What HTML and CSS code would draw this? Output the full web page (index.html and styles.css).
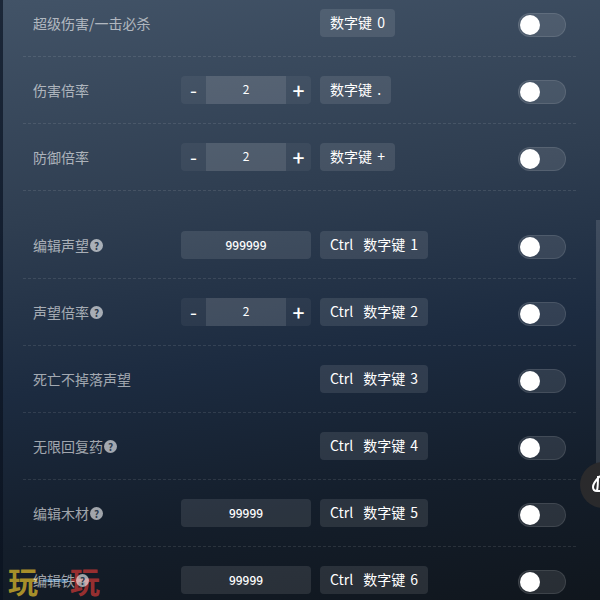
FILE: index.html
```html
<!DOCTYPE html>
<html lang="zh-CN">
<head>
<meta charset="utf-8">
<title>修改器</title>
<link rel="stylesheet" href="styles.css">
</head>
<body>
<div class="page">
  <div class="mark"><span class="gold">玩</span><i class="streak"></i><span class="red">玩</span></div>
  <main class="list">
    <section class="group">
      <div class="row"><span class="label">超级伤害/一击必杀</span><span></span><div class="key"><span>数字键 0</span></div><span class="toggle"><i class="knob"></i></span></div>
      <div class="row"><span class="label">伤害倍率</span><div class="stepper"><span class="btn">-</span><span class="val">2</span><span class="btn plus">+</span></div><div class="key"><span>数字键 .</span></div><span class="toggle"><i class="knob"></i></span></div>
      <div class="row"><span class="label">防御倍率</span><div class="stepper"><span class="btn">-</span><span class="val">2</span><span class="btn plus">+</span></div><div class="key"><span>数字键 +</span></div><span class="toggle"><i class="knob"></i></span></div>
    </section>
    <section class="group second">
      <div class="row"><span class="label">编辑声望<b class="help">?</b></span><div class="field">999999</div><div class="key"><span>Ctrl</span><span>数字键 1</span></div><span class="toggle"><i class="knob"></i></span></div>
      <div class="row"><span class="label">声望倍率<b class="help">?</b></span><div class="stepper"><span class="btn">-</span><span class="val">2</span><span class="btn plus">+</span></div><div class="key"><span>Ctrl</span><span>数字键 2</span></div><span class="toggle"><i class="knob"></i></span></div>
      <div class="row"><span class="label">死亡不掉落声望</span><span></span><div class="key"><span>Ctrl</span><span>数字键 3</span></div><span class="toggle"><i class="knob"></i></span></div>
      <div class="row"><span class="label">无限回复药<b class="help">?</b></span><span></span><div class="key"><span>Ctrl</span><span>数字键 4</span></div><span class="toggle"><i class="knob"></i></span></div>
      <div class="row"><span class="label">编辑木材<b class="help">?</b></span><div class="field">99999</div><div class="key"><span>Ctrl</span><span>数字键 5</span></div><span class="toggle"><i class="knob"></i></span></div>
      <div class="row"><span class="label">编辑铁<b class="help">?</b></span><div class="field">99999</div><div class="key"><span>Ctrl</span><span>数字键 6</span></div><span class="toggle"><i class="knob"></i></span></div>
    </section>
  </main>
  <div class="scrollbar"></div>
  <div class="float-btn">
    <svg width="46" height="46" viewBox="0 0 46 46" fill="none" stroke="#fff" stroke-width="2"><path d="M20 14c-3 3-7 7-7 11 0 3 2 4 4 4h4M18 14c0 5 0 10-1 15"/></svg>
  </div>
</div>
</body>
</html>
```
FILE: styles.css
```css
* { box-sizing: border-box; }
html, body { margin: 0; height: 100%; overflow: hidden; background: #10171f; }
body { font-family: "Noto Sans CJK SC", "Noto Sans", sans-serif; font-size: 14px; }
.page {
  position: relative;
  width: 600px;
  height: 600px;
  overflow: hidden;
  border-left: 3px solid rgba(10, 20, 35, 0.65);
  background: linear-gradient(172deg, #425367 0%, #2f3e51 33%, #1c2b40 58%, #141e2b 80%, #10161d 100%);
}
.list { position: relative; width: 553px; margin: -10px 0 0 20px; }
.second { margin-top: 21px; }
.row {
  display: grid;
  grid-template-columns: 148px 130px 1fr 48px;
  align-items: center;
  height: 67px;
  padding: 19px 10px 19px 10px;
  border-bottom: 1px dashed rgba(255, 255, 255, 0.1);
}
.label { display: flex; align-items: center; color: rgba(255, 255, 255, 0.6); line-height: 28px; white-space: nowrap; }
.help {
  display: flex; align-items: center; justify-content: center;
  width: 13px; height: 13px; margin-left: 1px; border-radius: 50%;
  background: rgba(255, 255, 255, 0.6); color: #2c3a4c; font-size: 10px; font-weight: 700; line-height: 13px;
}
.stepper { display: flex; height: 28px; border-radius: 4px; overflow: hidden; background: rgba(255, 255, 255, 0.05); color: #fff; }
.btn { width: 25px; display: flex; align-items: center; justify-content: center; font-size: 20px; line-height: 1; }
.plus { font-size: 21px; font-weight: 500; }
.val { flex: 1; display: flex; align-items: center; justify-content: center; font-size: 12px; padding-bottom: 3px; background: rgba(255, 255, 255, 0.1); }
.field {
  display: flex; align-items: center; justify-content: center;
  height: 28px; border-radius: 4px; background: rgba(255, 255, 255, 0.1);
  color: #fff; font-size: 12px; font-weight: 500; padding-bottom: 1px;
}
.key {
  justify-self: start; display: flex; gap: 10px; align-items: center;
  height: 28px; margin-left: 9px; padding: 0 10px 2px; border-radius: 4px;
  background: rgba(255, 255, 255, 0.1); color: #fff; white-space: nowrap; word-spacing: 2px;
}
.toggle {
  display: block; align-self: end; position: relative; width: 48px; height: 24px;
  border-radius: 12px; border: 1px solid rgba(255, 255, 255, 0.1); background: rgba(255, 255, 255, 0.1);
}
.knob { position: absolute; left: 1px; top: 1px; width: 20px; height: 20px; border-radius: 50%; background: #fff; }
.scrollbar { position: absolute; left: 593px; top: 220px; width: 4px; height: 245px; background: rgba(255, 255, 255, 0.12); }
.float-btn { position: absolute; left: 577px; top: 462px; width: 46px; height: 46px; border-radius: 50%; background: #2a2a2c; }
.mark { position: absolute; left: 5px; top: 562px; display: flex; font-size: 30px; font-weight: 700; line-height: 36px; }
.gold { color: #a68e2a; }
.red { color: rgba(170, 50, 50, 0.9); }
.streak { align-self: flex-start; width: 25px; height: 3px; margin: 17px 2px 0 5px; background: rgba(80, 140, 190, 0.7); }
```
